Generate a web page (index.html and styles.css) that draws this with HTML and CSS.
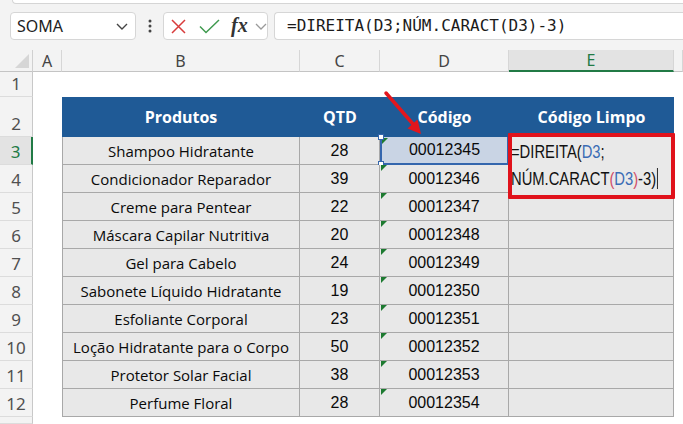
FILE: index.html
```html
<!DOCTYPE html>
<html lang="pt">
<head>
<meta charset="utf-8">
<title>Excel - DIREITA</title>
<link rel="stylesheet" href="styles.css">
</head>
<body>
<div class="app">
  <div class="top">
    <div class="ribbon-edge"></div>
    <div class="fbar">
      <div class="namebox">
        <span class="nb-text">SOMA</span>
        <svg class="chev" width="12" height="7" viewBox="0 0 12 7"><polyline points="1,1 6,6 11,1" fill="none" stroke="#444" stroke-width="1.4"/></svg>
      </div>
      <svg class="kebab" width="4" height="14" viewBox="0 0 4 14"><circle cx="2" cy="2" r="1.5" fill="#444"/><circle cx="2" cy="7" r="1.5" fill="#444"/><circle cx="2" cy="12" r="1.5" fill="#444"/></svg>
      <div class="fxgroup">
        <svg class="ico-x" width="15" height="15" viewBox="0 0 15 15"><path d="M1 1 L14 14 M14 1 L1 14" stroke="#d83b3b" stroke-width="1.5" fill="none"/></svg>
        <svg class="ico-ok" width="21" height="15" viewBox="0 0 21 15"><polyline points="1,7.5 7,13.5 20,1" fill="none" stroke="#3f9a4f" stroke-width="1.5"/></svg>
        <span class="fx">fx</span>
        <svg class="chev2" width="12" height="7" viewBox="0 0 12 7"><polyline points="1,1 6,6 11,1" fill="none" stroke="#9a9a9a" stroke-width="1.3"/></svg>
      </div>
      <div class="formula">=DIREITA(D3;NÚM.CARACT(D3)-3)</div>
    </div>
  </div>

  <div class="sheet">
    <!-- column headers -->
    <div class="corner"><svg width="14" height="14" viewBox="0 0 14 14"><polygon points="14,0 14,14 0,14" fill="#d6d6d6"/></svg></div>
    <div class="ch">A</div>
    <div class="ch">B</div>
    <div class="ch">C</div>
    <div class="ch">D</div>
    <div class="ch sel">E</div>
    <div class="ch"></div>

    <!-- row 1 -->
    <div class="rh">1</div>
    <div class="c"></div><div class="c"></div><div class="c"></div><div class="c"></div><div class="c"></div><div class="c"></div>

    <!-- row 2 -->
    <div class="rh">2</div>
    <div class="c"></div>
    <div class="h">Produtos</div>
    <div class="h">QTD</div>
    <div class="h">Código</div>
    <div class="h">Código Limpo</div>
    <div class="c"></div>

    <!-- row 3 -->
    <div class="rh sel">3</div>
    <div class="c"></div>
    <div class="t first">Shampoo Hidratante</div>
    <div class="t num">28</div>
    <div class="t num code ref">00012345<span class="hdl hdl-t"></span><span class="hdl hdl-b"></span></div>
    <div class="t e3">
      <div class="editor"><span class="ed-text">=DIREITA(<span class="rb">D3</span>;<br>NÚM.CARACT<span class="rp">(</span><span class="rb">D3</span><span class="rp">)</span>-3)<span class="caret"></span></span></div>
      <div class="redbox"></div>
    </div>
    <div class="c"></div>

    <div class="rh">4</div>
    <div class="c"></div>
    <div class="t first">Condicionador Reparador</div>
    <div class="t num">39</div>
    <div class="t num code">00012346</div>
    <div class="t"></div>
    <div class="c"></div>

    <div class="rh">5</div>
    <div class="c"></div>
    <div class="t first">Creme para Pentear</div>
    <div class="t num">22</div>
    <div class="t num code">00012347</div>
    <div class="t"></div>
    <div class="c"></div>

    <div class="rh">6</div>
    <div class="c"></div>
    <div class="t first">Máscara Capilar Nutritiva</div>
    <div class="t num">20</div>
    <div class="t num code">00012348</div>
    <div class="t"></div>
    <div class="c"></div>

    <div class="rh">7</div>
    <div class="c"></div>
    <div class="t first">Gel para Cabelo</div>
    <div class="t num">24</div>
    <div class="t num code">00012349</div>
    <div class="t"></div>
    <div class="c"></div>

    <div class="rh">8</div>
    <div class="c"></div>
    <div class="t first">Sabonete Líquido Hidratante</div>
    <div class="t num">19</div>
    <div class="t num code">00012350</div>
    <div class="t"></div>
    <div class="c"></div>

    <div class="rh">9</div>
    <div class="c"></div>
    <div class="t first">Esfoliante Corporal</div>
    <div class="t num">23</div>
    <div class="t num code">00012351</div>
    <div class="t"></div>
    <div class="c"></div>

    <div class="rh">10</div>
    <div class="c"></div>
    <div class="t first">Loção Hidratante para o Corpo</div>
    <div class="t num">50</div>
    <div class="t num code">00012352</div>
    <div class="t"></div>
    <div class="c"></div>

    <div class="rh">11</div>
    <div class="c"></div>
    <div class="t first">Protetor Solar Facial</div>
    <div class="t num">38</div>
    <div class="t num code">00012353</div>
    <div class="t"></div>
    <div class="c"></div>

    <div class="rh">12</div>
    <div class="c"></div>
    <div class="t first">Perfume Floral</div>
    <div class="t num">28</div>
    <div class="t num code">00012354</div>
    <div class="t"></div>
    <div class="c"></div>

    <div class="rh"></div>
    <div class="c"></div><div class="c"></div><div class="c"></div><div class="c"></div><div class="c"></div><div class="c"></div>

    <svg class="arrow" width="50" height="55" viewBox="0 0 50 55">
      <line x1="6" y1="5" x2="33" y2="36" stroke="#e3161d" stroke-width="3.5" stroke-linecap="round"/>
      <polygon points="41,46 27.5,40.5 37.5,31.5" fill="#e3161d"/>
    </svg>
  </div>
</div>
</body>
</html>
```

FILE: styles.css
```css
html, body {
  margin: 0;
  padding: 0;
}
body {
  width: 683px;
  height: 424px;
  overflow: hidden;
  background: #ffffff;
  font-family: "Open Sans", "Noto Sans", sans-serif;
}
.app {
  width: 683px;
  height: 424px;
  display: flex;
  flex-direction: column;
}

/* ---------- formula bar ---------- */
.top {
  height: 50px;
  background: #f3f3f3;
  flex: none;
}
.ribbon-edge {
  height: 3px;
  margin-left: 12px;
  background: #ffffff;
  border-bottom: 1px solid #d5d5d5;
  border-left: 1px solid #d5d5d5;
  border-bottom-left-radius: 6px;
}
.fbar {
  display: flex;
  align-items: flex-start;
  padding: 8px 0 0 10px;
}
.namebox {
  box-sizing: border-box;
  width: 126px;
  height: 28px;
  background: #ffffff;
  border: 1px solid #d6d6d6;
  border-radius: 4px;
  display: flex;
  align-items: center;
  justify-content: space-between;
  padding: 0 7px 0 6px;
}
.nb-text {
  font-size: 16px;
  color: #222;
  font-family: "Noto Sans", sans-serif;
}
.kebab {
  margin: 7px 0 0 12px;
}
.fxgroup {
  box-sizing: border-box;
  width: 105px;
  height: 28px;
  margin-left: 11px;
  background: #ffffff;
  border: 1px solid #d6d6d6;
  border-radius: 4px;
  display: flex;
  align-items: center;
  padding-left: 7px;
}
.ico-ok {
  margin-left: 13px;
}
.fx {
  margin-left: 11px;
  font-family: "Liberation Serif", serif;
  font-style: italic;
  font-weight: bold;
  font-size: 20px;
  line-height: 20px;
  color: #333;
  margin-top: -2px;
}
.chev2 {
  margin-left: 7px;
}
.formula {
  box-sizing: border-box;
  flex: 1;
  height: 28px;
  margin-left: 6px;
  background: #ffffff;
  border: 1px solid #d6d6d6;
  border-right: none;
  border-radius: 4px 0 0 4px;
  padding-left: 12px;
  font-family: "DejaVu Sans Mono", monospace;
  font-size: 16px;
  line-height: 26px;
  color: #1a1a1a;
  white-space: nowrap;
}

/* ---------- sheet ---------- */
.sheet {
  position: relative;
  flex: 1;
  display: grid;
  grid-template-columns: 33px 29px 238px 80px 129px 165px 1fr;
  grid-template-rows: 22px 25px 40px repeat(10, 28px) 1fr;
  background: #ffffff;
}
.sheet > div {
  box-sizing: border-box;
}
.corner {
  background: #f3f3f3;
  border-right: 1px solid #d0d0d0;
  border-bottom: 1px solid #c4c4c4;
  display: flex;
  align-items: flex-end;
  justify-content: flex-end;
  padding: 0 3px 3px 0;
}
.ch {
  background: #f3f3f3;
  border-right: 1px solid #d6d6d6;
  border-bottom: 1px solid #c4c4c4;
  display: flex;
  align-items: center;
  justify-content: center;
  font-family: "Noto Sans", sans-serif;
  font-size: 16px;
  color: #444;
}
.ch.sel {
  background: #e3e3e3;
  color: #217a45;
  border-bottom: 2px solid #217a45;
}
.rh {
  background: #f3f3f3;
  border-right: 1px solid #c8c8c8;
  border-bottom: 1px solid #dcdcdc;
  display: flex;
  align-items: flex-end;
  justify-content: center;
  font-family: "Noto Sans", sans-serif;
  font-size: 17px;
  line-height: 22px;
  padding-bottom: 1px;
  color: #505050;
}
.rh.sel {
  background: #e3e3e3;
  color: #217a45;
  border-right: 2px solid #217a45;
}
.c {
  background: #ffffff;
}
.h {
  background: #1f5a96;
  color: #ffffff;
  font-weight: 700;
  font-size: 16px;
  display: flex;
  align-items: center;
  justify-content: center;
}
.t {
  position: relative;
  background: #e8e8e8;
  border-right: 1px solid #a8a8a8;
  border-bottom: 1px solid #a8a8a8;
  display: flex;
  align-items: center;
  justify-content: center;
  font-size: 15px;
  color: #0a0a0a;
  white-space: nowrap;
}
.t.first {
  border-left: 1px solid #a8a8a8;
}
.t.num {
  font-family: "Liberation Sans", Arial, sans-serif;
  font-size: 16px;
}
.t.code::before {
  content: "";
  position: absolute;
  top: 0;
  left: 1px;
  border-top: 6px solid #1d7a31;
  border-right: 6px solid transparent;
}
.t.ref {
  background: #c9d4e4;
  border-left: 2px solid #3466ad;
  border-right: 2px solid #3466ad;
  border-bottom: 2px solid #3466ad;
}
.hdl {
  position: absolute;
  left: -4px;
  width: 6px;
  height: 6px;
  box-sizing: border-box;
  background: #ffffff;
  border: 1px solid #3466ad;
}
.hdl-t {
  top: -3px;
}
.hdl-b {
  bottom: -4px;
}
.t.code.ref::before {
  left: 0;
  top: 1px;
}

/* editing cell E3 */
.e3 {
  overflow: visible;
  z-index: 2;
}
.editor {
  position: absolute;
  top: 0;
  left: 0;
  width: 164px;
  height: 56px;
  box-sizing: border-box;
  background: #e9e9e9;
  padding: 2px 0 0 2px;
  font-family: "Liberation Sans", Arial, sans-serif;
  font-size: 18px;
  line-height: 27px;
  color: #111;
  white-space: nowrap;
  overflow: hidden;
}
.ed-text {
  display: inline-block;
  transform: scaleX(0.82);
  transform-origin: 0 0;
}
.rb {
  color: #3a6cb5;
}
.rp {
  color: #d0506b;
}
.caret {
  display: inline-block;
  width: 1.3px;
  height: 21px;
  background: #000;
  vertical-align: -4px;
  margin-left: 1px;
}
.redbox {
  position: absolute;
  top: -4px;
  left: -1px;
  width: 167px;
  height: 66px;
  box-sizing: border-box;
  border: 4px solid #e0121b;
  border-radius: 1px;
}
.arrow {
  position: absolute;
  left: 380px;
  top: 38px;
  z-index: 3;
}
```
